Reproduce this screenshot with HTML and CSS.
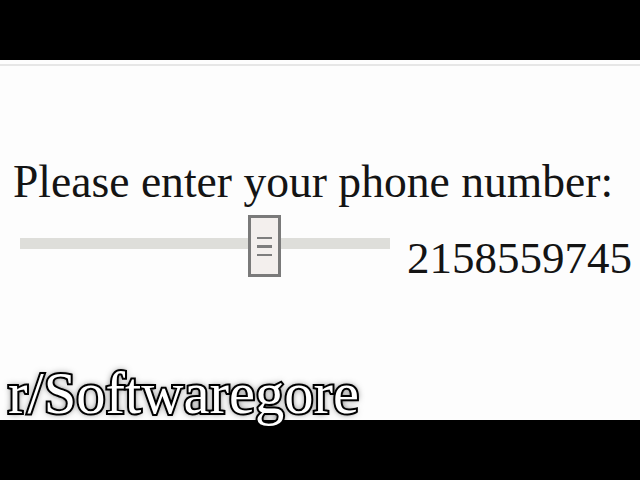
FILE: index.html
```html
<!DOCTYPE html>
<html>
<head>
<meta charset="utf-8">
<link rel="stylesheet" href="styles.css">
</head>
<body>
<div class="frame">
  <div class="bar"></div>
  <div class="screen">
    <div class="rule"></div>
    <div class="prompt">Please enter your phone number:</div>
    <div class="row">
      <div class="slider">
        <div class="track"></div>
        <div class="thumb">
          <span class="grip"></span>
          <span class="grip grip-mid"></span>
          <span class="grip"></span>
        </div>
      </div>
      <div class="value">2158559745</div>
    </div>
  </div>
  <div class="bar"></div>
  <div class="watermark">r/Softwaregore</div>
</div>
</body>
</html>
```
FILE: styles.css
```css
html, body {
  margin: 0;
  padding: 0;
  background: #000;
}
.frame {
  position: relative;
  width: 640px;
  height: 480px;
  display: flex;
  flex-direction: column;
  font-family: "Liberation Serif", "Times New Roman", serif;
}
.bar {
  height: 60px;
  background: #000;
  flex: none;
}
.screen {
  height: 360px;
  background: #fdfdfd;
  display: flex;
  flex-direction: column;
}
.rule {
  height: 2px;
  margin-top: 4px;
  background: #e6e6e6;
}
.prompt {
  margin-top: 93px;
  margin-left: 13px;
  font-size: 45.6px;
  line-height: 45px;
  color: #141414;
  white-space: nowrap;
}
.row {
  display: flex;
  align-items: flex-start;
  margin-top: 11px;
}
.slider {
  position: relative;
  margin-left: 20px;
  width: 370px;
  height: 62px;
}
.track {
  margin-top: 23px;
  height: 11px;
  background: #dededa;
}
.thumb {
  position: absolute;
  left: 228px;
  top: 0;
  width: 27px;
  height: 56px;
  border: 3px solid #7a7a7a;
  background: #f3efed;
  display: flex;
  flex-direction: column;
  align-items: center;
  justify-content: center;
  gap: 6px;
}
.grip {
  display: block;
  width: 15px;
  height: 2px;
  background: #7d7d7d;
}
.grip-mid {
  height: 3px;
}
.value {
  margin-left: 17px;
  margin-top: 21px;
  font-size: 45px;
  line-height: 45px;
  color: #141414;
}
.watermark {
  position: absolute;
  left: 8px;
  top: 364px;
  font-size: 58.5px;
  line-height: 60px;
  color: #fff;
  -webkit-text-stroke: 4px #000;
  paint-order: stroke fill;
  text-shadow: 0 0 7px rgba(0,0,0,0.75), 0 0 3px rgba(0,0,0,0.9);
  white-space: nowrap;
}
```
